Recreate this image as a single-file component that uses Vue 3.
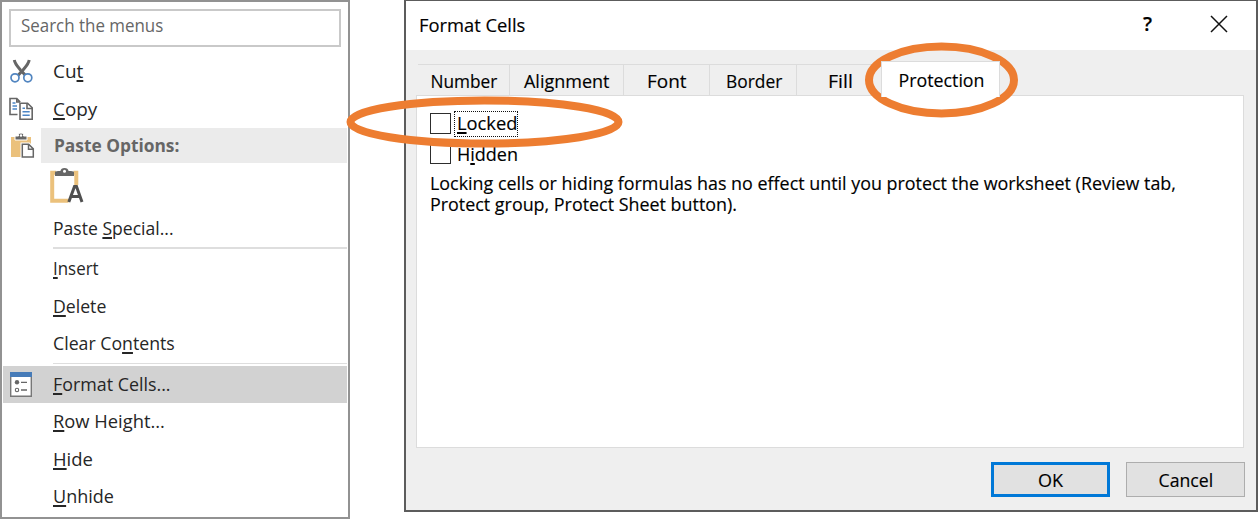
<script setup>
// Condenses or widens a label horizontally to its nominal width.
const vFit = {
  mounted(el, { value }) {
    el.style.transform = `scaleX(${value / el.offsetWidth})`
  }
}

const editItems = [
  { pre: 'Cu', key: 't', post: '', w: 30.5, icon: 'cut' },
  { pre: '', key: 'C', post: 'opy', w: 44, icon: 'copy' }
]
const cellItems = [
  { pre: '', key: 'I', post: 'nsert', w: 46 },
  { pre: '', key: 'D', post: 'elete', w: 53 },
  { pre: 'Clear Co', key: 'n', post: 'tents', w: 122 }
]
const formatItems = [
  { pre: '', key: 'F', post: 'ormat Cells...', w: 118, icon: 'format', active: true },
  { pre: '', key: 'R', post: 'ow Height...', w: 112 },
  { pre: '', key: 'H', post: 'ide', w: 40 },
  { pre: '', key: 'U', post: 'nhide', w: 61 }
]
const tabs = [
  { name: 'Number', w: 67, cls: 'number' },
  { name: 'Alignment', w: 86, cls: 'alignment' },
  { name: 'Font', w: 40, cls: 'font' },
  { name: 'Border', w: 56, cls: 'border' },
  { name: 'Fill', w: 25, cls: 'fill' },
  { name: 'Protection', w: 86, cls: 'protection' }
]
</script>

<template>
  <main class="stage">
    <nav class="menu">
      <div class="search"><span v-fit="142">Search the menus</span></div>

      <div v-for="item in editItems" :key="item.key" class="item">
        <span class="slot">
          <svg v-if="item.icon === 'cut'" width="24" height="24" viewBox="0 0 24 24" fill="none">
            <path d="M4.3 1 C5 5 8 8 10.5 11 L16.5 17.5 M19.2 1 C18.5 5 15.5 8 13 11 L7 17.5" stroke="#666" stroke-width="3" />
            <circle cx="5" cy="18.8" r="4" fill="#fff" stroke="#5185c0" stroke-width="1.7" />
            <circle cx="17.8" cy="18.8" r="4" fill="#fff" stroke="#5185c0" stroke-width="1.7" />
          </svg>
          <svg v-else class="copy-icon" width="25" height="24" viewBox="0 0 25 24" fill="none" stroke="#666" stroke-width="1.6">
            <path d="M8.5 17.5H1V1.5H7.8L11.2 5M7.8 1.5V5H11" />
            <path d="M11 6.2H18.6L23.2 10.8V22.2H11Z" fill="#fff" />
            <path d="M18 6.5V11.5H23" />
            <path d="M3.5 6H6.5M3.5 9H8M3.5 12H8M13.5 11.3H16M13.5 14.8H20.7M13.5 18.3H20.7" stroke="#4c86c6" />
          </svg>
        </span>
        <span v-fit="item.w" class="label">{{ item.pre }}<u>{{ item.key }}</u>{{ item.post }}</span>
      </div>

      <div class="item paste-head">
        <span class="slot">
          <svg width="25" height="27" viewBox="0 0 25 27">
            <path d="M1 5H21V25H1Z" fill="#ebc17c" />
            <path d="M5 8V4H8.5V2.4Q8.5 1 11 1T13.5 2.4V4H17V8Z" fill="#666" stroke="#fff" stroke-width="1" />
            <circle cx="11" cy="3.5" r="1.2" fill="#fff" />
            <path d="M10.5 10.5H19.5L25 16V27H10.5Z" fill="#fff" />
            <path d="M12.3 12.3H18.7L23.3 16.9V25H12.3ZM18.5 12.5V17.2H23" fill="#fff" stroke="#666" stroke-width="1.5" />
          </svg>
        </span>
        <span class="band"><b v-fit="125">Paste Options:</b></span>
      </div>
      <div class="paste-choice">
        <svg width="34" height="36" viewBox="0 0 34 36" fill="none">
          <path d="M6 4.8H2.2V32.8H18.5M23.5 4.8H26.3V17" stroke="#ebc17c" stroke-width="4" />
          <path d="M5 8V4.5Q5 3 8 3H10.4Q11 0 14.5 0T18.6 3H21Q24 3 24 4.5V8Z" fill="#666" />
          <circle cx="14.5" cy="3.3" r="1.5" fill="#fff" />
          <path d="M18.8 34L24.5 18.5H26.5L32 34M20.6 28.5H30.2" stroke="#505050" stroke-width="3" />
        </svg>
      </div>
      <div class="item special"><span class="slot" /><span v-fit="121" class="label">Paste <u>S</u>pecial...</span></div>
      <div class="rule" />

      <div v-for="item in cellItems" :key="item.key" class="item">
        <span class="slot" />
        <span v-fit="item.w" class="label">{{ item.pre }}<u>{{ item.key }}</u>{{ item.post }}</span>
      </div>
      <div class="rule last" />

      <div v-for="item in formatItems" :key="item.key" class="item" :class="{ active: item.active }">
        <span class="slot">
          <svg v-if="item.icon" width="22" height="25" viewBox="0 0 22 25">
            <path d="M.7 1H21.3V24.2H.7Z" fill="#fff" stroke="#777" stroke-width="1.4" />
            <path d="M0 0H22V5H0Z" fill="#467bb8" />
            <circle cx="7" cy="10.3" r="2.2" fill="#666" />
            <circle cx="7" cy="18" r="1.7" fill="none" stroke="#666" stroke-width="1.1" />
            <path d="M11 10.3H17M11 18H17" stroke="#666" stroke-width="1.3" />
          </svg>
        </span>
        <span v-fit="item.w" class="label">{{ item.pre }}<u>{{ item.key }}</u>{{ item.post }}</span>
      </div>
    </nav>

    <section class="dialog">
      <header class="title">
        <span v-fit="106">Format Cells</span>
        <span class="help">?</span>
        <svg width="18" height="18" viewBox="0 0 18 18"><path d="M1 1L17 17M17 1L1 17" stroke="#111" stroke-width="1.5" /></svg>
      </header>
      <div class="tabs">
        <div v-for="tab in tabs" :key="tab.name" class="tab" :class="tab.cls"><span v-fit="tab.w">{{ tab.name }}</span></div>
      </div>
      <div class="panel">
        <label class="check"><i class="box" /><span class="focus"><span v-fit="60"><u>L</u>ocked</span></span></label>
        <label class="check second"><i class="box" /><span class="plain"><span v-fit="61">H<u>i</u>dden</span></span></label>
        <p><span v-fit="745.5">Locking cells or hiding formulas has no effect until you protect the worksheet (Review tab,<br>Protect group, Protect Sheet button).</span></p>
      </div>
      <footer class="actions">
        <button class="btn ok"><span v-fit="25">OK</span></button>
        <button class="btn"><span v-fit="55">Cancel</span></button>
      </footer>
    </section>

    <svg class="marks" width="1258" height="519" viewBox="0 0 1258 519" fill="none" stroke="#ed7d31" stroke-width="8">
      <ellipse cx="484.5" cy="122" rx="134" ry="21.5" />
      <ellipse cx="941.5" cy="80" rx="72.5" ry="33.5" />
    </svg>
  </main>
</template>

<style>
body { margin: 0; background: #fff; }
</style>

<style scoped>
.stage {
  position: relative;
  display: flex;
  align-items: flex-start;
  width: 1258px;
  height: 519px;
  overflow: hidden;
  font: 18px/24px "Open Sans", "Noto Sans", sans-serif;
  color: #262626;
}
.stage * { box-sizing: border-box; }
span, b { white-space: nowrap; }
u { text-underline-offset: 2px; text-decoration-thickness: 1.5px; text-decoration-skip-ink: none; }
.menu {
  flex: none;
  width: 350px;
  height: 519px;
  border: 2px solid #929292;
  background: #fff;
  padding: 7px 1px 0;
}
.search {
  width: 332px;
  height: 38px;
  margin: 0 0 6px 6px;
  padding: 2px 0 0 10px;
  border: 2px solid #c9c9c9;
  color: #666;
}
.search span, .label, .band b, .title > span:first-child, p span, .focus span, .plain span {
  display: inline-block;
  transform-origin: left center;
}
.item { display: flex; align-items: center; height: 37.5px; padding-bottom: 1px; }
.item.active { background: #d2d2d2; padding-bottom: 0; }
.slot { flex: none; display: flex; width: 44px; padding-left: 7px; margin-right: 6px; }
.copy-icon { margin-left: -1px; }
.label { flex: none; }
.paste-head { height: 35px; padding-bottom: 0; }
.paste-head .slot { width: 38px; margin-right: 0; }
.band { flex: 1; height: 35px; padding: 5px 0 0 13px; background: #ebebeb; color: #666; }
.paste-choice { height: 46px; padding: 5px 0 0 47px; }
.special { height: 38px; }
.rule { height: 1.5px; margin: 0 0 1.5px 50px; background: #dedede; }
.rule.last { margin-bottom: 1.5px; }

.dialog {
  flex: none;
  width: 854px;
  height: 512px;
  margin-left: 54px;
  border: 2px solid #5c5c5c;
  border-top-width: 1.5px;
  background: #efefef;
  color: #000;
  -webkit-text-stroke: 0.15px #000;
}
.title { display: flex; align-items: center; height: 49px; padding: 0 28px 2px 13px; background: #fff; }
.title > span:first-child { flex: none; }
.title svg { margin-top: -1px; }
.help { margin: -2px 58px 0 auto; font-size: 20px; font-weight: 600; }
.tabs { display: flex; align-items: flex-end; height: 45px; padding-left: 12px; }
.tab {
  display: flex;
  align-items: center;
  justify-content: center;
  height: 31px;
  border-top: 1.5px solid #dcdcdc;
  border-right: 1.5px solid #dcdcdc;
  padding-top: 2px;
}
.tab span { flex: none; }
.number { width: 92px; padding-left: 1px; }
.alignment { width: 113.5px; padding-left: 1px; }
.font { width: 86.5px; padding-left: 2px; }
.border { width: 87px; padding-left: 2px; }
.fill { width: 84px; border-right: 0; padding-left: 2px; }
.protection {
  position: relative;
  z-index: 1;
  width: 119px;
  height: 36px;
  margin-bottom: -2px;
  border-left: 1.5px solid #dcdcdc;
  background: #fff;
  padding: 1px 0 0 1px;
}
.panel {
  width: 828px;
  height: 353px;
  margin-left: 10px;
  border: 1.5px solid #dcdcdc;
  background: #fff;
  padding: 13px 0 0 13px;
}
.check { display: flex; align-items: center; height: 29px; }
.second { margin-top: 1px; }
.box { flex: none; width: 21px; height: 21px; border: 1.5px solid #2d2d2d; background: #fff; }
.focus { width: 64px; height: 26px; margin-left: 3px; padding-left: 2px; border: 1px dotted #111; line-height: 23px; }
.plain { padding-left: 6px; }
p { margin: 5px 0 0; line-height: 20.5px; }
.actions { display: flex; justify-content: flex-end; gap: 16px; padding: 14px 11px 0 0; }
.btn {
  width: 119px;
  height: 35px;
  border: 1.5px solid #adadad;
  background: #e1e1e1;
  padding: 0;
  font: inherit;
  color: #000;
}
.btn span { display: inline-block; }
.ok { border: 3px solid #0078d7; }
.marks { position: absolute; left: 0; top: 0; pointer-events: none; }
</style>
